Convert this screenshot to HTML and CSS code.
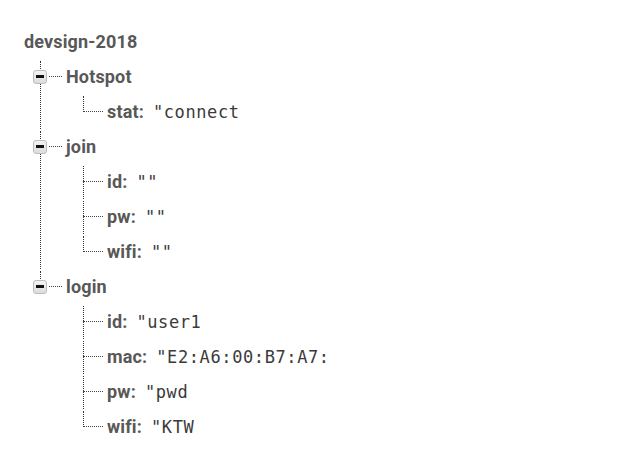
FILE: index.html
```html
<!DOCTYPE html>
<html>
<head>
<meta charset="utf-8">
<link rel="stylesheet" href="styles.css">
</head>
<body>
<div class="tree">
  <div class="row root-row"><span class="key">devsign-2018</span></div>
  <ul class="branch lvl1">
    <li>
      <div class="row"><span class="toggle"></span><span class="conn"></span><span class="key">Hotspot</span></div>
      <ul class="branch lvl2">
        <li><div class="row"><span class="conn"></span><span class="key">stat:</span><span class="val">"connect</span></div></li>
      </ul>
    </li>
    <li>
      <div class="row"><span class="toggle"></span><span class="conn"></span><span class="key">join</span></div>
      <ul class="branch lvl2">
        <li><div class="row"><span class="conn"></span><span class="key">id:</span><span class="val">""</span></div></li>
        <li><div class="row"><span class="conn"></span><span class="key">pw:</span><span class="val">""</span></div></li>
        <li><div class="row"><span class="conn"></span><span class="key">wifi:</span><span class="val">""</span></div></li>
      </ul>
    </li>
    <li>
      <div class="row"><span class="toggle"></span><span class="conn"></span><span class="key">login</span></div>
      <ul class="branch lvl2">
        <li><div class="row"><span class="conn"></span><span class="key">id:</span><span class="val">"user1</span></div></li>
        <li><div class="row"><span class="conn"></span><span class="key">mac:</span><span class="val">"E2:A6:00:B7:A7:</span></div></li>
        <li><div class="row"><span class="conn"></span><span class="key">pw:</span><span class="val">"pwd</span></div></li>
        <li><div class="row"><span class="conn"></span><span class="key">wifi:</span><span class="val">"KTW</span></div></li>
      </ul>
    </li>
  </ul>
</div>
</body>
</html>
```
FILE: styles.css
```css
html, body {
  margin: 0;
  padding: 0;
  background: #fff;
}
.tree {
  padding: 24px 0 0 24px;
  font-family: Roboto, "Liberation Sans", sans-serif;
}
.row {
  height: 35px;
  display: flex;
  align-items: center;
  white-space: nowrap;
}
.key {
  font-weight: 700;
  font-size: 18px;
  color: #585858;
  letter-spacing: 0.15px;
}
.val {
  font-family: "DejaVu Sans Mono", "Liberation Mono", monospace;
  font-size: 17px;
  letter-spacing: 0.6px;
  color: #3a3a3a;
  margin-left: 9px;
}
ul {
  list-style: none;
  margin: 0;
  padding: 0;
}
li {
  position: relative;
}
li::before {
  content: "";
  position: absolute;
  left: 0;
  top: 2px;
  bottom: 0;
  border-left: 1px dotted #333;
}
li:last-child::before {
  bottom: auto;
  height: 16px;
}
.lvl1 {
  margin-left: 16px;
}
.lvl2 {
  margin-left: 43px;
}
.toggle {
  position: relative;
  z-index: 1;
  box-sizing: border-box;
  width: 14px;
  height: 14px;
  margin-left: -7px;
  border: 1px solid #bdbdbd;
  border-radius: 3px;
  background: linear-gradient(#f4f4f4, #dcdcdc);
  display: flex;
  align-items: center;
  justify-content: center;
}
.toggle::after {
  content: "";
  width: 8px;
  height: 3px;
  background: #111;
}
.conn {
  height: 0;
  border-top: 1px dotted #444;
  margin-right: 4px;
}
.lvl1 > li > .row > .conn {
  width: 13px;
  margin-left: 2px;
}
.lvl2 > li > .row > .conn {
  width: 20px;
}
```
